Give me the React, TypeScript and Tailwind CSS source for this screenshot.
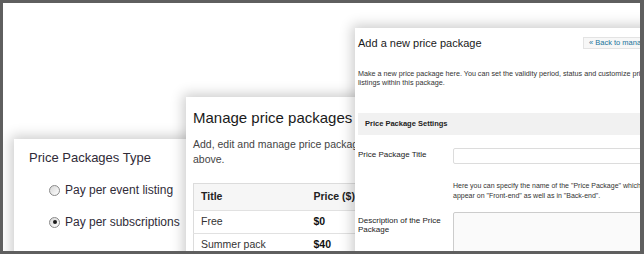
const Radio = ({ checked }: { checked?: boolean }) => (
  <span className="flex-none w-[11px] h-[11px] rounded-full border border-[#8a8a8a] bg-gradient-to-br from-[#d6d6d6] to-white flex items-center justify-center">
    {checked && <span className="w-[4px] h-[4px] rounded-full bg-[#1a1a1a]" />}
  </span>
);

const TypePanel = () => (
  <div className="absolute left-[11px] top-[136px] w-[260px] h-[140px] bg-white shadow-[0_0_12px_3px_rgba(0,0,0,0.2)] pl-[15px] pt-[11px] text-[#302b38]">
    <h3 className="text-[13px] leading-[16px]">Price Packages Type</h3>
    <div className="mt-[16px] pl-[20px] flex flex-col gap-[16px] text-[12px] leading-[16px]">
      <label className="flex items-center gap-[5px]">
        <Radio />
        <span>Pay per event listing</span>
      </label>
      <label className="flex items-center gap-[5px]">
        <Radio checked />
        <span>Pay per subscriptions</span>
      </label>
    </div>
  </div>
);

const rows = [
  { title: "Free", price: "$0" },
  { title: "Summer pack", price: "$40" },
];

const ManagePanel = () => (
  <div className="absolute left-[183px] top-[94px] w-[420px] h-[200px] bg-white shadow-[0_0_12px_3px_rgba(0,0,0,0.2)] px-[7px] pt-[12px]">
    <h2 className="text-[15px] leading-[18px] text-[#1a1a1a] whitespace-nowrap">Manage price packages</h2>
    <p className="mt-[10px] text-[10.5px] leading-[15px] text-[#444] whitespace-nowrap">
      Add, edit and manage price packages and their settings. To add a new one, use the button
      <br />
      above.
    </p>
    <table className="mt-[16px] w-[380px] border border-[#dcdcdc] border-collapse text-[10.5px] text-[#333]">
      <thead>
        <tr className="h-[27px] bg-[#f6f6f6] border-b border-[#e1e1e1]">
          <th className="w-[113px] pl-[7px] text-left font-bold text-[#222]">Title</th>
          <th className="pl-[7px] text-left font-bold text-[#222]">Price ($)</th>
        </tr>
      </thead>
      <tbody>
        {rows.map((r) => (
          <tr key={r.title} className="h-[23px] border-b border-[#e1e1e1]">
            <td className="pl-[7px]">{r.title}</td>
            <td className="pl-[7px] font-bold text-[#111]">{r.price}</td>
          </tr>
        ))}
      </tbody>
    </table>
  </div>
);

const AddPanel = () => (
  <div className="absolute left-[352px] top-[25px] w-[300px] h-[240px] bg-white shadow-[0_0_12px_3px_rgba(0,0,0,0.2)] pl-[3px] pt-[8px] text-[#333]">
    <div className="flex items-start">
      <h2 className="flex-none w-[225px] text-[11px] leading-[14px] text-[#1a1a1a]">Add a new price package</h2>
      <span className="flex-none mt-[1px] h-[12px] pl-[5px] pr-[6px] border border-[#e3e3e3] bg-[#f7f7f7] text-[7.5px] leading-[10px] text-[#21759b] whitespace-nowrap">
        « Back to manage price packages
      </span>
    </div>
    <p className="mt-[19px] text-[7.2px] leading-[9px] text-[#333] whitespace-nowrap">
      Make a new price package here. You can set the validity period, status and customize price for
      <br />
      listings within this package.
    </p>
    <div className="mt-[26px] h-[22px] bg-[#f1f1f1] pl-[7px] flex items-center text-[7.5px] font-bold text-[#222]">
      Price Package Settings
    </div>
    <div className="mt-[13px] flex">
      <div className="flex-none w-[95px] pt-[2px] text-[8px] leading-[10px] text-[#222]">Price Package Title</div>
      <div className="flex flex-col">
        <div className="w-[260px] h-[16px] border border-[#dcdcdc] rounded-[2px] bg-white" />
        <p className="mt-[17px] text-[7px] leading-[10px] text-[#333] whitespace-nowrap">
          Here you can specify the name of the "Price Package" which will
          <br />
          appear on "Front-end" as well as in "Back-end".
        </p>
      </div>
    </div>
    <div className="mt-[11px] flex">
      <div className="flex-none w-[95px] pt-[3.5px] text-[8px] leading-[9px] text-[#222]">
        Description of the Price
        <br />
        Package
      </div>
      <div className="w-[260px] h-[60px] border border-[#cccccc] rounded-[2px] bg-[#fafafa]" />
    </div>
  </div>
);

export default function App() {
  return (
    <div className="relative w-[644px] h-[254px] overflow-hidden bg-white border-[3px] border-r-4 border-[#5f5f5f] font-['Liberation_Sans',Arial,sans-serif]">
      <TypePanel />
      <ManagePanel />
      <AddPanel />
    </div>
  );
}
